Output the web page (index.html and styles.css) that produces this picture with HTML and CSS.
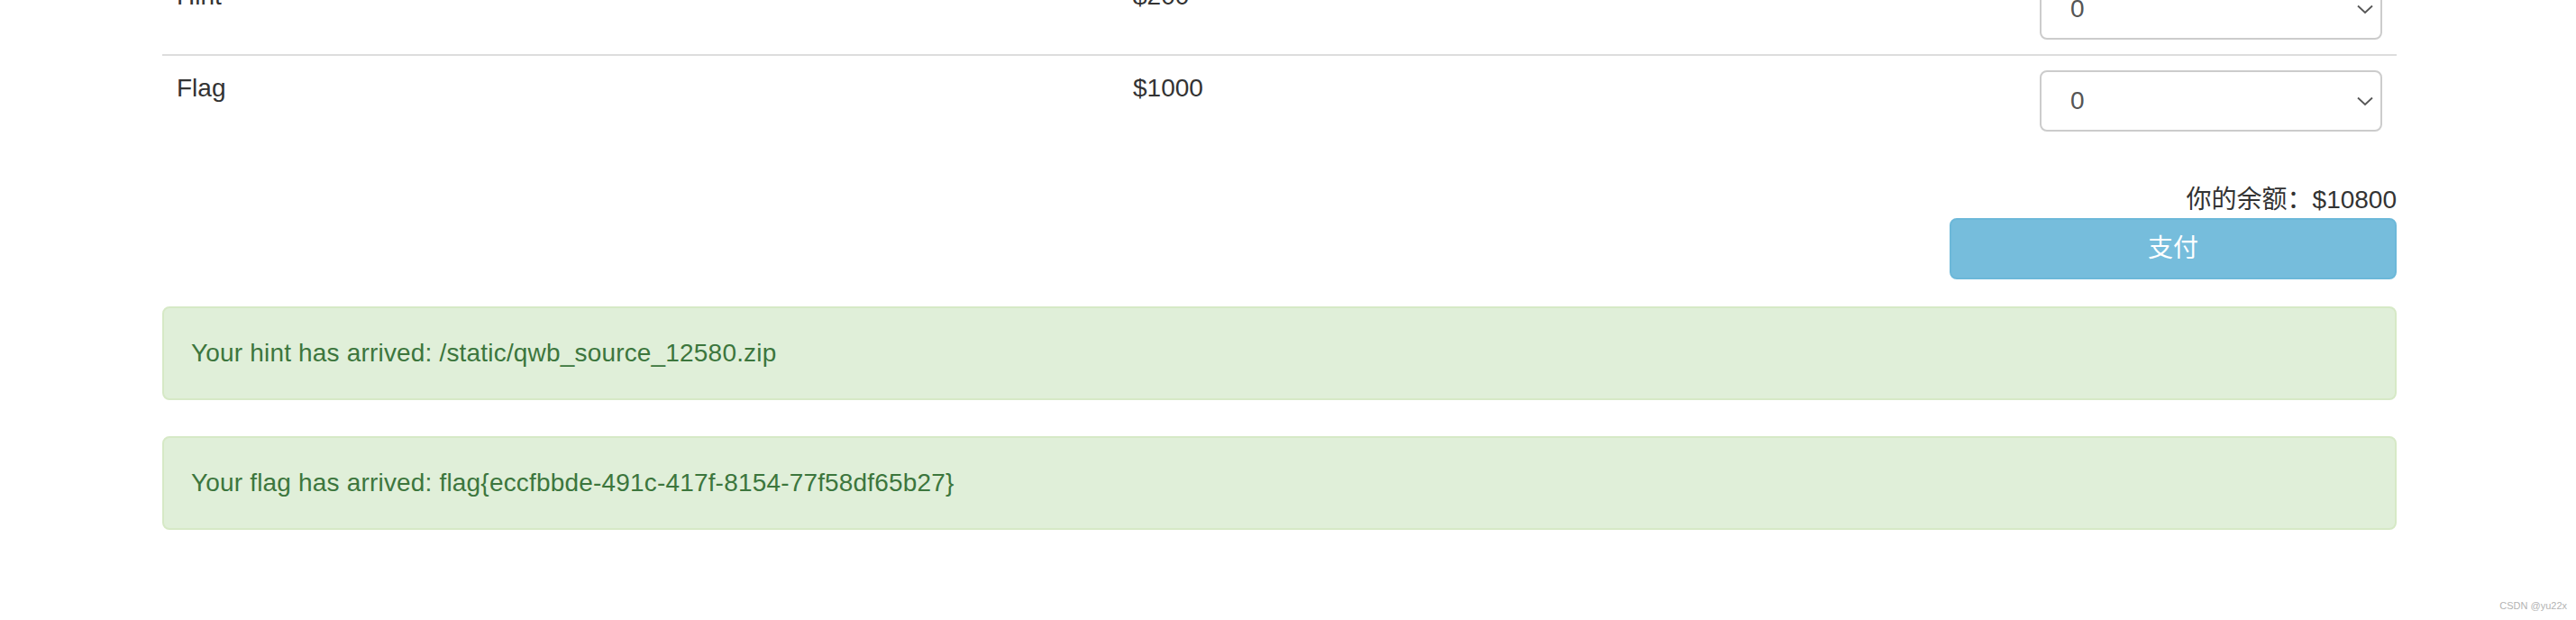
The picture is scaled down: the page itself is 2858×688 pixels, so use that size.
FILE: index.html
```html
<!DOCTYPE html>
<html lang="zh">
<head>
<meta charset="utf-8">
<title>Shop</title>
<link rel="stylesheet" href="styles.css">
</head>
<body>
<div class="container">
  <div class="table">
    <div class="row first">
      <div class="cell">Hint</div>
      <div class="cell">$200</div>
      <div class="cell">
        <div class="select"><span>0</span><svg class="chev" width="18" height="11" viewBox="0 0 18 11"><polyline points="1,1.5 9,9 17,1.5" fill="none" stroke="#555" stroke-width="1.8"/></svg></div>
      </div>
    </div>
    <div class="row">
      <div class="cell">Flag</div>
      <div class="cell">$1000</div>
      <div class="cell">
        <div class="select"><span>0</span><svg class="chev" width="18" height="11" viewBox="0 0 18 11"><polyline points="1,1.5 9,9 17,1.5" fill="none" stroke="#555" stroke-width="1.8"/></svg></div>
      </div>
    </div>
  </div>
  <div class="pay">
    <div class="balance">你的余额：$10800</div>
    <button class="btn">支付</button>
  </div>
  <div class="alert">Your hint has arrived: /static/qwb_source_12580.zip</div>
  <div class="alert">Your flag has arrived: flag{eccfbbde-491c-417f-8154-77f58df65b27}</div>
</div>
<div class="watermark">CSDN @yu22x</div>
</body>
</html>
```
FILE: styles.css
```css
html, body {
  margin: 0;
  padding: 0;
  background: #fff;
  overflow: hidden;
}
body {
  font-family: "Liberation Sans", "Noto Sans CJK SC", sans-serif;
  font-size: 28px;
  line-height: 40px;
  color: #333;
  width: 2858px;
  height: 688px;
  position: relative;
}
.container {
  margin-left: 180px;
  width: 2479px;
}
.table {
  margin-top: -40px;
  margin-bottom: 40px;
}
.row {
  display: grid;
  grid-template-columns: 1061px 1006px 1fr;
  border-top: 2px solid #ddd;
}
.row.first {
  border-top: none;
}
.cell {
  padding: 16px;
}
.select {
  height: 68px;
  box-sizing: border-box;
  border: 2px solid #ccc;
  border-radius: 8px;
  display: flex;
  align-items: center;
  justify-content: space-between;
  padding: 0 8px 0 32px;
  color: #555;
  background: #fff;
}
.chev {
  display: block;
}
.pay {
  display: flex;
  flex-direction: column;
  align-items: flex-end;
}
.balance {
  font-family: "Liberation Sans", "Noto Sans CJK SC", sans-serif;
}
.btn {
  width: 496px;
  height: 68px;
  box-sizing: border-box;
  background: #76bddc;
  border: 2px solid #6cb8d9;
  border-radius: 8px;
  color: #fff;
  font-family: "Liberation Sans", "Noto Sans CJK SC", sans-serif;
  font-size: 28px;
  line-height: 40px;
  padding: 12px 24px;
  margin: 0 0 30px 0;
}
.alert {
  background: #e0efd9;
  border: 2px solid #d6e9c6;
  border-radius: 8px;
  color: #3c763d;
  padding: 30px;
  margin-bottom: 40px;
  letter-spacing: 0.18px;
}
.watermark {
  position: absolute;
  right: 10px;
  bottom: 9px;
  font-family: "Liberation Sans", sans-serif;
  font-size: 11px;
  line-height: 14px;
  color: #b3b3b3;
}
```
